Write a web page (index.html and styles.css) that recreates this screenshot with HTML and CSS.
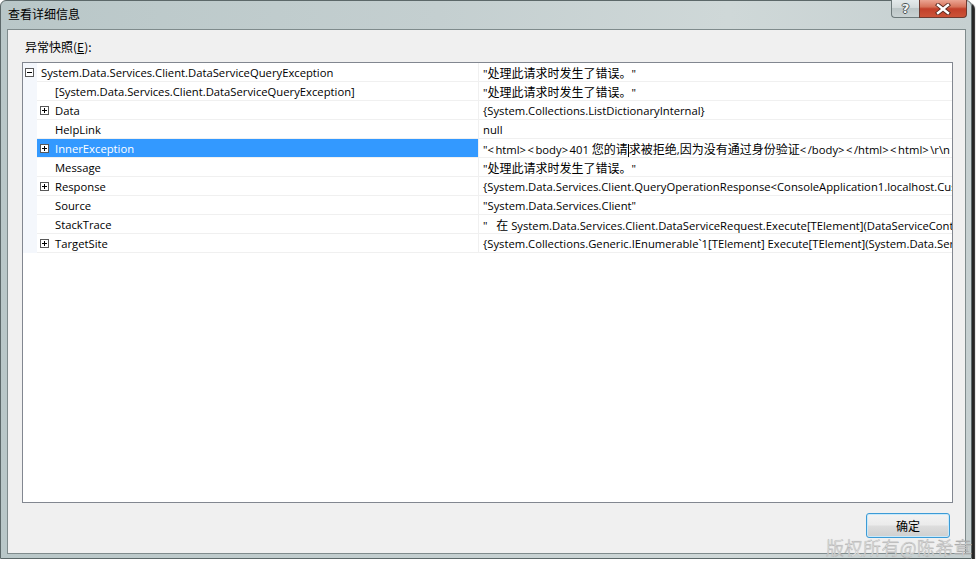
FILE: index.html
```html
<!DOCTYPE html>
<html lang="zh-CN">
<head>
<meta charset="utf-8">
<title>查看详细信息</title>
<link rel="stylesheet" href="styles.css">
</head>
<body>
<div class="window">
  <div class="titlebar">
    <span class="title">查看详细信息</span>
    <div class="caption">
      <div class="cbtn help"><span class="q">?</span></div>
      <div class="cbtn close">
        <svg width="20" height="12" viewBox="0 0 20 12">
          <path d="M5 2 L15 10 M15 2 L5 10" stroke="#5a2a20" stroke-width="4.2" stroke-linecap="square" fill="none"/>
          <path d="M5 2 L15 10 M15 2 L5 10" stroke="#ffffff" stroke-width="2.4" stroke-linecap="square" fill="none"/>
        </svg>
      </div>
    </div>
  </div>
  <div class="client">
    <div class="label">异常快照(<u>E</u>):</div>
    <div class="tree">
      <div class="row">
        <div class="gut"><span class="exp minus root-exp"></span></div>
        <div class="name root-name">System.Data.Services.Client.DataServiceQueryException</div>
        <div class="value">"<span class="cjk">处理此请求时发生了错误。</span>"</div>
      </div>
      <div class="row">
        <div class="gut"></div>
        <div class="name"><span class="noexp"></span>[System.Data.Services.Client.DataServiceQueryException]</div>
        <div class="value">"<span class="cjk">处理此请求时发生了错误。</span>"</div>
      </div>
      <div class="row">
        <div class="gut"></div>
        <div class="name"><span class="exp plus"></span>Data</div>
        <div class="value">{System.Collections.ListDictionaryInternal}</div>
      </div>
      <div class="row">
        <div class="gut"></div>
        <div class="name"><span class="noexp"></span>HelpLink</div>
        <div class="value">null</div>
      </div>
      <div class="row sel">
        <div class="gut"></div>
        <div class="name"><span class="exp plus"></span>InnerException</div>
        <div class="value">"<span class="ang">&lt;</span>html<span class="ang">&gt;&lt;</span>body<span class="ang">&gt;</span>401 <span class="cjk">您的请<span class="caret"></span>求被拒绝</span>,<span class="cjk">因为没有通过身份验证</span><span class="ang">&lt;</span>/body<span class="ang">&gt;&lt;</span>/html<span class="ang">&gt;&lt;</span>html<span class="ang">&gt;</span>\r\n</div>
      </div>
      <div class="row">
        <div class="gut"></div>
        <div class="name"><span class="noexp"></span>Message</div>
        <div class="value">"<span class="cjk">处理此请求时发生了错误。</span>"</div>
      </div>
      <div class="row">
        <div class="gut"></div>
        <div class="name"><span class="exp plus"></span>Response</div>
        <div class="value">{System.Data.Services.Client.QueryOperationResponse&lt;ConsoleApplication1.localhost.Customers&gt;}</div>
      </div>
      <div class="row">
        <div class="gut"></div>
        <div class="name"><span class="noexp"></span>Source</div>
        <div class="value">"System.Data.Services.Client"</div>
      </div>
      <div class="row">
        <div class="gut"></div>
        <div class="name"><span class="noexp"></span>StackTrace</div>
        <div class="value">"&nbsp;&nbsp;&nbsp;<span class="cjk">在</span> System.Data.Services.Client.DataServiceRequest.Execute[TElement](DataServiceContext context)</div>
      </div>
      <div class="row">
        <div class="gut"></div>
        <div class="name"><span class="exp plus"></span>TargetSite</div>
        <div class="value">{System.Collections.Generic.IEnumerable`1[TElement] Execute[TElement](System.Data.Services.Client.DataServiceContext)}</div>
      </div>
    </div>
    <div class="footer">
      <button class="ok">确定</button>
    </div>
  </div>
  <div class="watermark">版权所有@陈希章</div>
</div>
</body>
</html>
```
FILE: styles.css
```css
body {
  margin: 0;
  background: #ffffff;
  font-family: "Open Sans", "Noto Sans CJK SC", sans-serif;
  color: #000;
}

.window {
  position: relative;
  width: 972px;
  height: 559px;
  box-sizing: border-box;
  border: 1px solid #5c6869;
  border-radius: 6px 6px 0 0;
  background: linear-gradient(to right, #b9c7c8 0%, #c4cfd0 45%, #cfd8d8 75%, #c6d0d1 100%);
  box-shadow: 3px 3px 1px rgba(0, 0, 0, 0.85);
  padding: 0 5px 4px 6px;
  display: flex;
  flex-direction: column;
}

.titlebar {
  height: 28px;
  display: flex;
  align-items: flex-start;
  flex: none;
}

.title {
  font-family: "Noto Sans CJK SC", sans-serif;
  font-size: 12px;
  line-height: 16px;
  margin-top: 5px;
  margin-left: 1px;
}

.caption {
  margin-left: auto;
  margin-top: -1px;
  margin-right: -1px;
  display: flex;
}

.cbtn {
  height: 18px;
  box-sizing: border-box;
  display: flex;
  align-items: center;
  justify-content: center;
}

.help {
  width: 28px;
  border: 1px solid #6c7879;
  border-top: none;
  border-right: none;
  border-radius: 0 0 0 4px;
  background: linear-gradient(#e4eaeb 0%, #d3dadb 45%, #bcc6c7 50%, #c9d2d3 100%);
}

.q {
  font-family: "DejaVu Sans", sans-serif;
  font-weight: bold;
  font-size: 13px;
  line-height: 13px;
  color: #f4f6f6;
  text-shadow: 1px 0 0 #4d5556, -1px 0 0 #4d5556, 0 1px 0 #4d5556, 0 -1px 0 #4d5556;
}

.close {
  width: 48px;
  border: 1px solid #6e3a30;
  border-top: none;
  border-radius: 0 0 4px 0;
  background: linear-gradient(#eba593 0%, #d7735a 40%, #c2402a 52%, #cc5338 100%);
}

.client {
  flex: 1;
  border: 1px solid #7f8b8c;
  background: #f0f0f0;
  display: flex;
  flex-direction: column;
  padding-top: 9px;
}

.label {
  font-family: "Noto Sans CJK SC", sans-serif;
  font-size: 12px;
  line-height: 16px;
  height: 16px;
  margin-left: 17px;
  margin-bottom: 7px;
}

.tree {
  margin: 0 12px 0 14px;
  height: 441px;
  flex: none;
  box-sizing: border-box;
  border: 1px solid #828790;
  background: #ffffff;
  overflow: hidden;
}

.row {
  display: grid;
  grid-template-columns: 14px 441px 1fr;
  height: 19px;
  font-size: 11.25px;
  line-height: 17px;
}

.gut {
  background: #f4f7fc;
  position: relative;
}

.name,
.value {
  border-bottom: 1px solid #f0f0f0;
  white-space: nowrap;
  overflow: hidden;
  padding-top: 1px;
}

.name {
  display: flex;
  align-items: center;
  padding-left: 3px;
}

.root-name {
  padding-left: 4px;
}

.value {
  border-left: 1px solid #f0f0f0;
  padding-left: 4px;
}

.cjk {
  font-family: "Noto Sans CJK SC", sans-serif;
  font-size: 12px;
}

.ang {
  letter-spacing: 1.5px;
}

.sel .name {
  background: #3399ff;
  color: #ffffff;
}

.exp,
.noexp {
  width: 9px;
  height: 9px;
  flex: none;
  margin-right: 6px;
  box-sizing: border-box;
}

.exp {
  position: relative;
  border: 1px solid #585858;
  background: #ffffff;
  margin-top: -1px;
}

.root-exp {
  position: absolute;
  left: 2px;
  top: 5px;
  margin-top: 0;
}

.exp::before {
  content: "";
  position: absolute;
  left: 1px;
  top: 3px;
  width: 5px;
  height: 1px;
  background: #000;
}

.plus::after {
  content: "";
  position: absolute;
  left: 3px;
  top: 1px;
  width: 1px;
  height: 5px;
  background: #000;
}

.caret {
  display: inline-block;
  width: 0;
  height: 13px;
  border-left: 1px solid #000;
  vertical-align: -3px;
}

.footer {
  display: flex;
  justify-content: flex-end;
  padding: 10px 15px 0 0;
}

.ok {
  width: 84px;
  height: 25px;
  box-sizing: border-box;
  border: 1px solid #3c9bd6;
  border-radius: 3px;
  background: linear-gradient(#f3f3f3 0%, #ebebeb 48%, #dddddd 52%, #cfcfcf 100%);
  box-shadow: inset 0 0 0 1px #c9e9fa;
  font-family: "Noto Sans CJK SC", sans-serif;
  font-size: 12px;
  color: #000;
  padding: 0;
}

.watermark {
  position: absolute;
  left: 825px;
  top: 535px;
  white-space: nowrap;
  font-family: "Noto Sans CJK SC", sans-serif;
  font-weight: 300;
  font-size: 18px;
  line-height: 22px;
  color: #f6f6f6;
  -webkit-text-stroke: 0.3px #a0a0a0;
  text-shadow: 0 0 1px #b0b0b0;
  letter-spacing: 0.5px;
}
```
